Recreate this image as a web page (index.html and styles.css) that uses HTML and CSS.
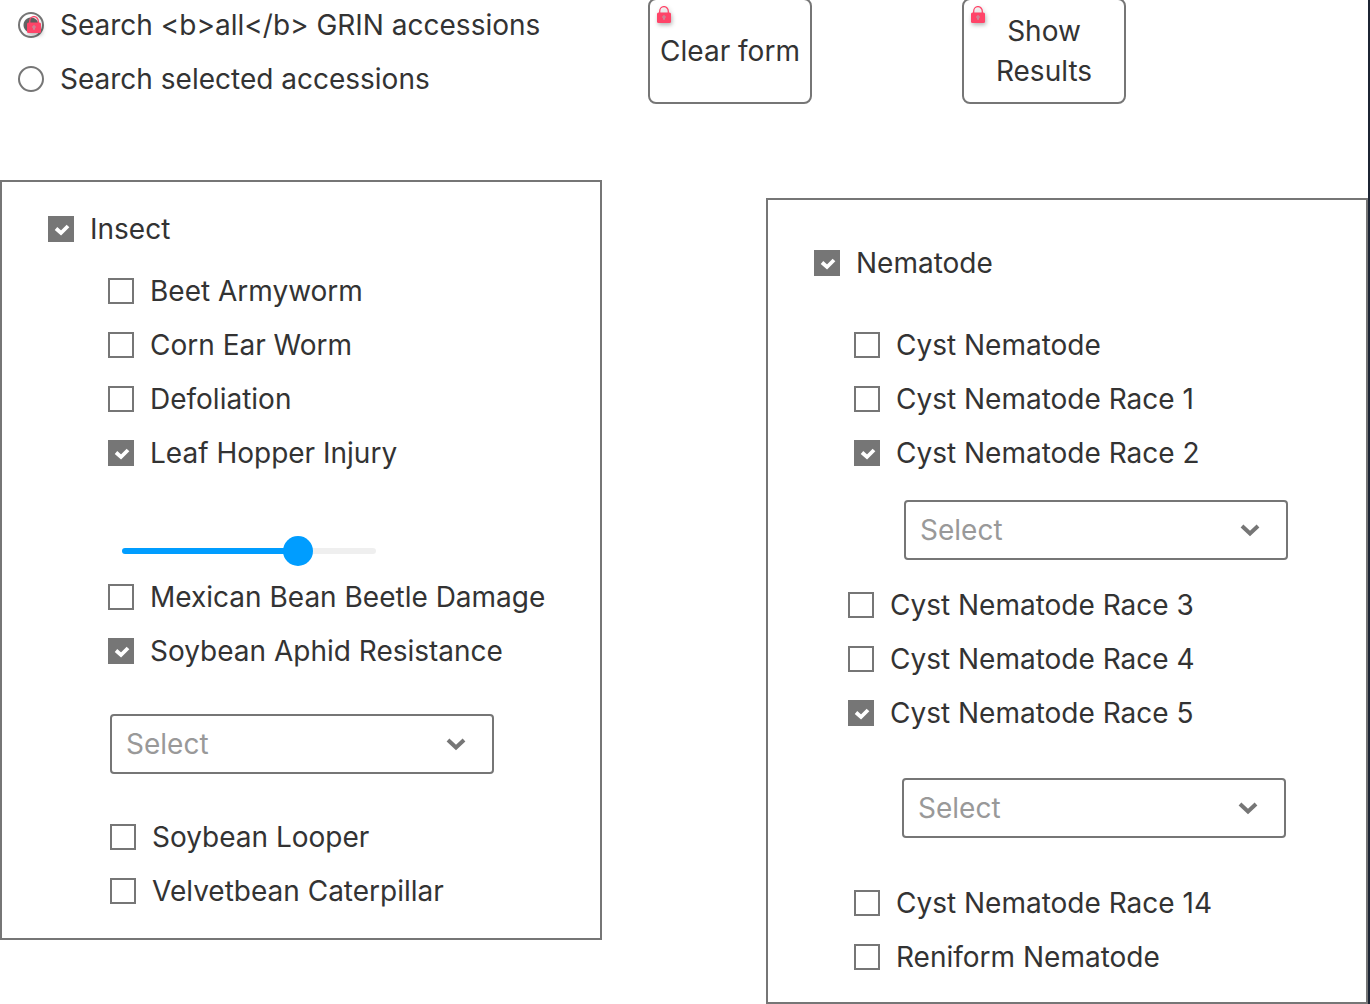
FILE: index.html
```html
<!DOCTYPE html>
<html lang="en">
<head>
<meta charset="utf-8">
<title>GRIN accessions search</title>
<link rel="stylesheet" href="styles.css">
</head>
<body>
<svg class="symbols" aria-hidden="true">
  <symbol id="lock" viewBox="0 0 14 18">
    <path d="M2.700 8V5.200a4.300 4.600 0 0 1 8.600 0V8" fill="none" stroke="#ff4468" stroke-width="1.300"/>
    <rect y="6.500" width="14" height="10.500" rx="1.500" fill="#ff4468"/>
    <path d="M7 14v-2" stroke="#b9a0a8" stroke-width="1"/>
    <circle cx="7" cy="11" r="1.200" fill="none" stroke="#b9a0a8"/>
  </symbol>
  <symbol id="chevron" viewBox="0 0 20 14">
    <path d="M2 3l8 7.500 8-7.500" fill="none" stroke="#767676" stroke-width="4"/>
  </symbol>
</svg>
<form class="page">
  <header class="top">
    <div class="list scope">
      <label class="row"><span class="mark"><input type="radio" name="scope" checked><svg class="lock"><use href="#lock"/></svg></span>Search &lt;b&gt;all&lt;/b&gt; GRIN accessions</label>
      <label class="row"><input type="radio" name="scope">Search selected accessions</label>
    </div>
    <button type="button" class="action"><svg class="lock"><use href="#lock"/></svg>Clear form</button>
    <button type="button" class="action"><svg class="lock"><use href="#lock"/></svg>Show Results</button>
  </header>
  <main class="panels">
    <section class="panel insect">
      <label class="row"><input type="checkbox" checked>Insect</label>
      <div class="traits">
        <div class="list">
          <label class="row"><input type="checkbox">Beet Armyworm</label>
          <label class="row"><input type="checkbox">Corn Ear Worm</label>
          <label class="row"><input type="checkbox">Defoliation</label>
          <label class="row"><input type="checkbox" checked>Leaf Hopper Injury</label>
        </div>
        <input class="slider" type="range" min="0" max="100" value="72" aria-label="Leaf Hopper Injury level">
        <div class="list">
          <label class="row"><input type="checkbox">Mexican Bean Beetle Damage</label>
          <label class="row"><input type="checkbox" checked>Soybean Aphid Resistance</label>
        </div>
        <div class="dropdown aphid">
          <select aria-label="Soybean Aphid Resistance"><option>Select</option></select>
          <svg class="chevron"><use href="#chevron"/></svg>
        </div>
        <div class="list nudged">
          <label class="row"><input type="checkbox">Soybean Looper</label>
          <label class="row"><input type="checkbox">Velvetbean Caterpillar</label>
        </div>
      </div>
    </section>
    <section class="panel nematode">
      <label class="row"><input type="checkbox" checked>Nematode</label>
      <div class="traits">
        <div class="list inner">
          <label class="row"><input type="checkbox">Cyst Nematode</label>
          <label class="row"><input type="checkbox">Cyst Nematode Race 1</label>
          <label class="row"><input type="checkbox" checked>Cyst Nematode Race 2</label>
        </div>
        <div class="dropdown race2">
          <select aria-label="Cyst Nematode Race 2"><option>Select</option></select>
          <svg class="chevron"><use href="#chevron"/></svg>
        </div>
        <div class="list">
          <label class="row"><input type="checkbox">Cyst Nematode Race 3</label>
          <label class="row"><input type="checkbox">Cyst Nematode Race 4</label>
          <label class="row"><input type="checkbox" checked>Cyst Nematode Race 5</label>
        </div>
        <div class="dropdown race5">
          <select aria-label="Cyst Nematode Race 5"><option>Select</option></select>
          <svg class="chevron"><use href="#chevron"/></svg>
        </div>
        <div class="list inner">
          <label class="row"><input type="checkbox">Cyst Nematode Race 14</label>
          <label class="row"><input type="checkbox">Reniform Nematode</label>
        </div>
      </div>
    </section>
  </main>
</form>
</body>
</html>
```
FILE: styles.css
```css
* { box-sizing: border-box; }

body {
  margin: 0;
  background: #fff;
  color: #333;
  font: 28px/40px Inter, "Liberation Sans", sans-serif;
}

.symbols { position: absolute; width: 0; height: 0; }

.page {
  min-height: 100vh;
  border-right: 2px solid #1c2433;
}

.top {
  display: grid;
  grid-template-columns: minmax(0, 480px) 164px 164px;
  column-gap: 150px;
  align-items: start;
  min-height: 180px;
  padding-left: 18px;
}

.scope { padding-top: 5px; white-space: nowrap; }

.list {
  display: flex;
  flex-direction: column;
  align-items: flex-start;
  gap: 14px;
}

.row {
  display: flex;
  align-items: center;
  gap: 16px;
}

input, select, button {
  margin: 0;
  font: inherit;
  color: inherit;
  appearance: none;
}

input[type="checkbox"],
input[type="radio"] {
  flex: none;
  width: 26px;
  height: 26px;
  border: 2px solid #767676;
  background: #fff;
}

input[type="checkbox"]:checked {
  border: 0;
  background: #767676 url("data:image/svg+xml,%3Csvg xmlns='http://www.w3.org/2000/svg' viewBox='0 0 26 26'%3E%3Cpath d='M8 12.500l5 4.500 7-7' fill='none' stroke='white' stroke-width='3.800'/%3E%3C/svg%3E");
}

input[type="radio"] { display: block; border-radius: 50%; }

input[type="radio"]:checked {
  background: radial-gradient(circle, #666 7px, #fff 8px);
}

.mark { position: relative; }

.lock {
  position: absolute;
  top: 6px;
  left: 7px;
  width: 14px;
  height: 18px;
  overflow: visible;
  filter: drop-shadow(1px 2px 2px rgba(0, 0, 0, 0.3));
}

.mark .lock { top: 4px; left: 9px; }

.action {
  position: relative;
  height: 106px;
  margin-top: -2px;
  padding: 0 8px;
  border: 2px solid #767676;
  border-radius: 8px;
  background: #fff;
}

.panels {
  display: grid;
  grid-template-columns: 1fr 1fr;
  column-gap: 164px;
  align-items: start;
}

.panel { border: 2px solid #767676; }

.insect { padding: 27px 46px; }

.nematode { margin-top: 18px; padding: 43px 46px 25px; }

.insect .traits { margin-top: 22px; padding-left: 60px; }

.nematode .traits { margin-top: 42px; padding-left: 34px; }

.inner { padding-left: 6px; }

.nudged { padding-left: 2px; }

.slider {
  display: block;
  width: 254px;
  height: 30px;
  margin: 63px 0 11px 14px;
  background: none;
}

.slider::-webkit-slider-runnable-track {
  height: 6px;
  border-radius: 3px;
  background: linear-gradient(to right, #009dff 70%, #efefef 70%);
}

.slider::-webkit-slider-thumb {
  appearance: none;
  width: 30px;
  height: 30px;
  margin-top: -12px;
  border-radius: 50%;
  background: #009dff;
}

.dropdown {
  position: relative;
  width: 384px;
  max-width: 100%;
}

.aphid { margin: 43px 0 43px 2px; }

.race2 { margin: 27px 0 25px 56px; }

.race5 { margin: 45px 0 45px 54px; }

select {
  display: block;
  width: 100%;
  height: 60px;
  padding: 0 48px 0 14px;
  border: 2px solid #767676;
  border-radius: 4px;
  background: #fff;
  color: #999;
}

.chevron {
  position: absolute;
  top: 23px;
  right: 28px;
  width: 20px;
  height: 14px;
  pointer-events: none;
}
```
